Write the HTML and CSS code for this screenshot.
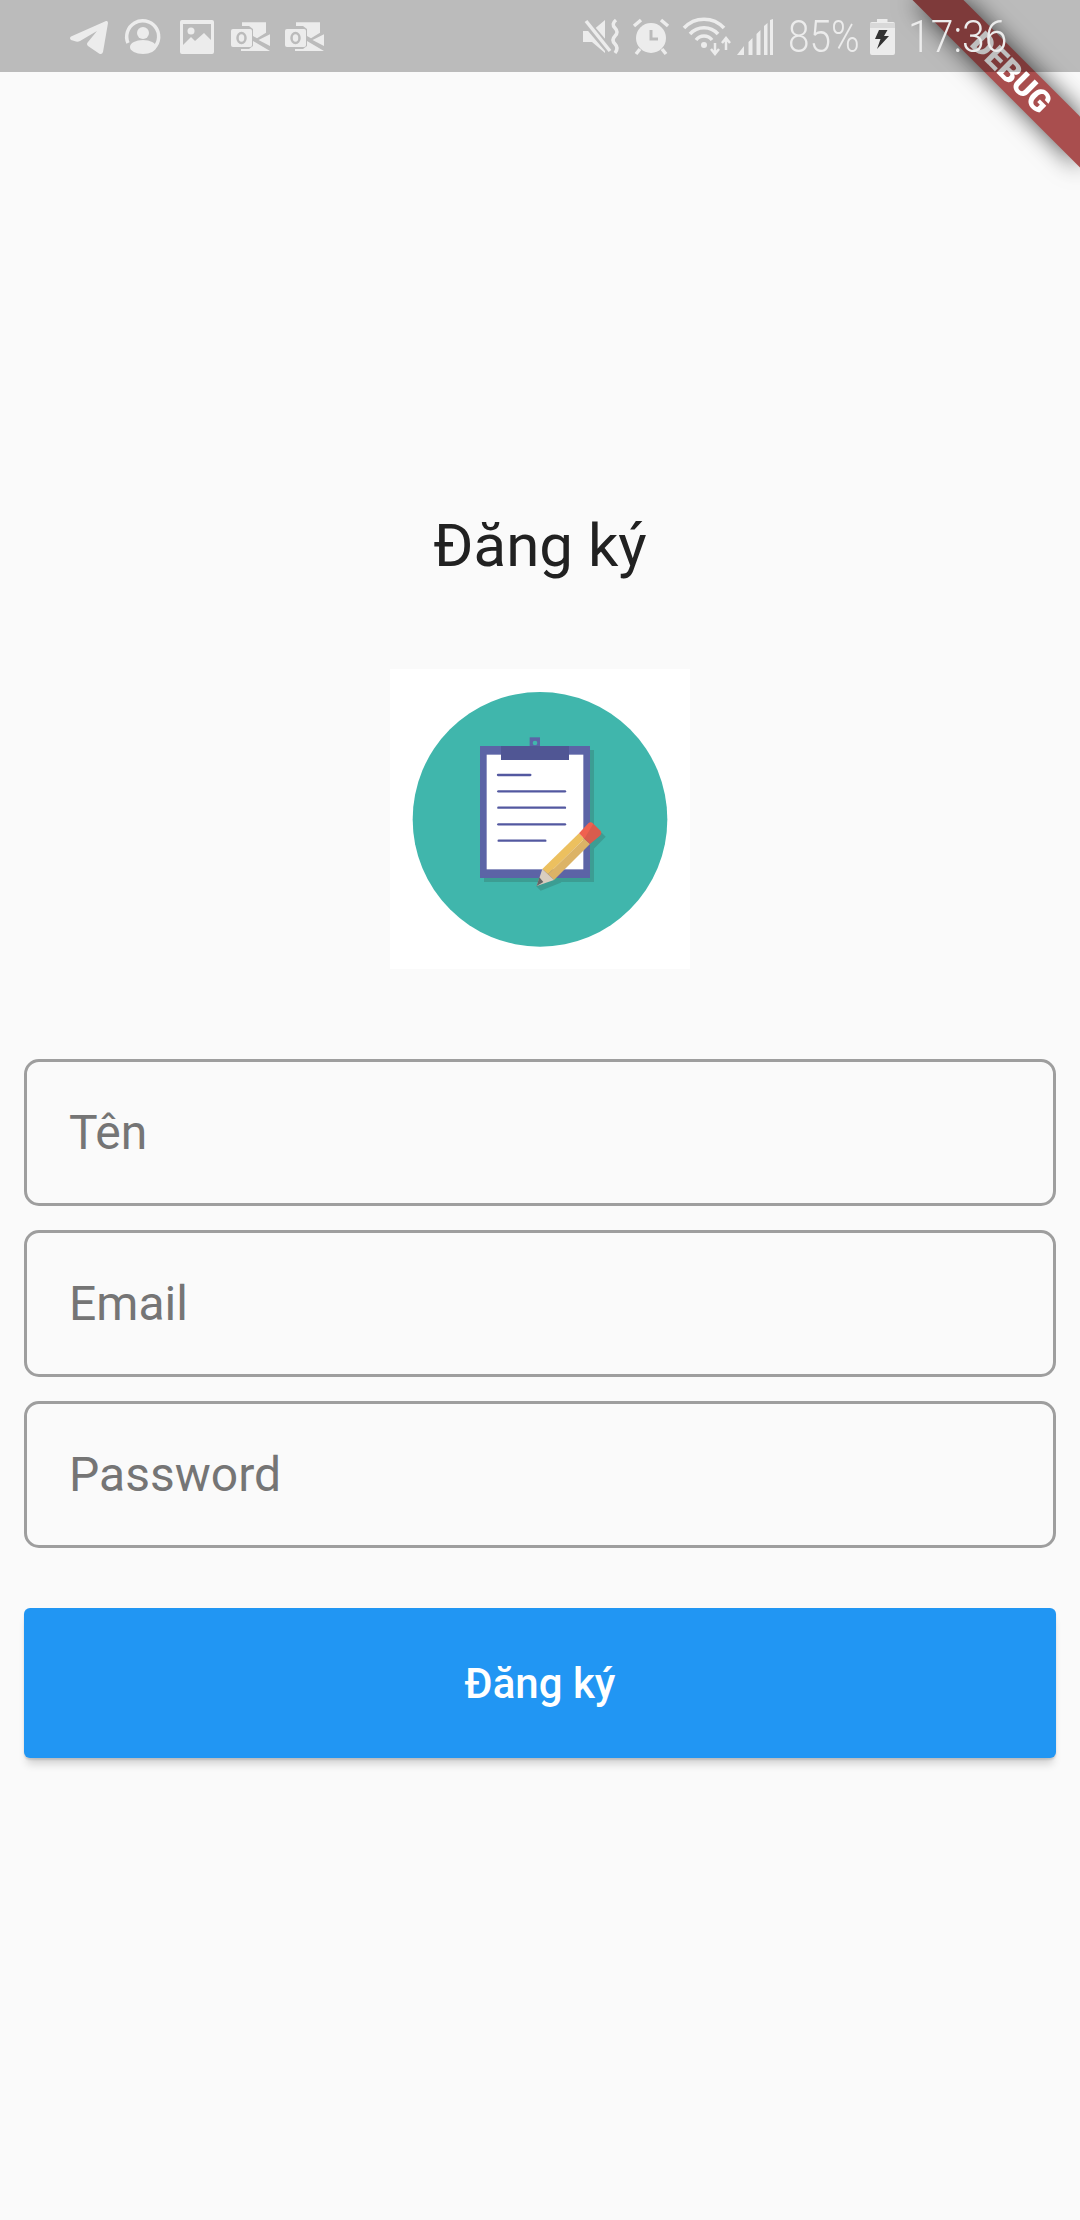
FILE: index.html
```html
<!DOCTYPE html>
<html lang="vi">

<head>
    <meta charset="UTF-8">
    <meta name="viewport" content="width=device-width, initial-scale=1.0">
    <title>Đăng ký</title>
    <link rel="stylesheet" href="styles.css">
</head>

<body>
    <div class="status-bar">
        <div class="status-left">
            <!-- telegram -->
            <svg class="icon" width="40" height="36" viewBox="0 0 40 36">
                <path d="M37 2 Q39 1.500 39 4 L34 33 Q33 36 30 34.500 L19 27 Q17 25 19 23 L28 12 L11 22 Q9 23 7 22.500 L2 21 Q0 19 2 17.500 Z" />
            </svg>
            <!-- contact -->
            <svg class="icon" width="36" height="36" viewBox="0 0 36 36">
                <path class="line" d="M3 24 A16 16 0 1 1 29 29" />
                <circle cx="18" cy="14" r="6" />
                <ellipse cx="18" cy="28" rx="13" ry="7" />
            </svg>
            <!-- gallery -->
            <svg class="icon icon-gallery" width="34" height="34" viewBox="0 0 34 34">
                <path fill-rule="evenodd" d="M2 0 H32 Q34 0 34 2 V32 Q34 34 32 34 H2 Q0 34 0 32 V2 Q0 0 2 0 Z M3 4 V25 L11 17 L15 21 L24 13 L31 20 V4 Z" />
                <circle cx="11" cy="11" r="3.500" />
            </svg>
            <!-- outlook -->
            <svg class="icon" width="38" height="32" viewBox="0 0 38 32">
                <rect x="0" y="8" width="21" height="18" rx="2" />
                <ellipse class="hole" cx="10.500" cy="17" rx="4" ry="5" />
                <path d="M11 1.300 H35 V11.700 L26 17.300 L22 15 V8 L18 5 H11 Z" />
                <path d="M39 13.300 V25 L27.500 19 Z" />
                <path d="M22 20 L39 30 H10 V28 H18 L22 25 Z" />
            </svg>
            <svg class="icon" width="38" height="32" viewBox="0 0 38 32">
                <rect x="0" y="8" width="21" height="18" rx="2" />
                <ellipse class="hole" cx="10.500" cy="17" rx="4" ry="5" />
                <path d="M11 1.300 H35 V11.700 L26 17.300 L22 15 V8 L18 5 H11 Z" />
                <path d="M39 13.300 V25 L27.500 19 Z" />
                <path d="M22 20 L39 30 H10 V28 H18 L22 25 Z" />
            </svg>
        </div>

        <div class="status-right">
            <!-- mute -->
            <svg class="icon" width="38" height="36" viewBox="0 0 38 36">
                <path d="M0 12 H9 L22 1 V34 L9 23 H0 Z" />
                <path class="cut" d="M1 1 L28 33" />
                <path class="thin" d="M3 2 L27 32" />
                <path class="thin" d="M33 1 Q28 5 32 9 Q36 13 32 17 Q28 21 32 25 Q36 29 32 34" />
            </svg>
            <!-- alarm -->
            <svg class="icon icon-alarm" width="36" height="36" viewBox="0 0 36 36">
                <circle cx="18" cy="19" r="15" />
                <path class="hand" d="M18 11 V20 H25" />
                <path class="thin" d="M1 7 L8 1 M28 1 L35 7 M7 30 L3 35 M29 30 L33 35" />
            </svg>
            <!-- wifi -->
            <svg class="icon icon-wifi" width="48" height="38" viewBox="0 0 48 38">
                <path class="thin" d="M1 10 A27 27 0 0 1 41 10 M7 16 A19 19 0 0 1 35 16 M13 22 A10 10 0 0 1 29 22" />
                <circle cx="21" cy="27" r="3" />
                <path class="thin-s" d="M32 25 V35 M28 31 L32 36 L36 31 M43 32 V21 M39 25 L43 20 L47 25" />
            </svg>
            <!-- signal -->
            <svg class="icon icon-signal" width="36" height="37" viewBox="0 0 36 37">
                <path d="M0 36 L7 27 V36 Z" />
                <path d="M11.500 23 L15.500 19 V36 H11.500 Z" />
                <path d="M19.500 15 L23.500 11 V36 H19.500 Z" />
                <path d="M27 7 L30.500 4 V36 H27 Z" />
                <path d="M33 1 L36 0 V36 H33 Z" />
            </svg>
            <span class="status-text battery-text">85%</span>
            <!-- battery -->
            <svg class="icon icon-battery" width="25" height="36" viewBox="0 0 25 36">
                <path d="M7 0 H17.500 V3 H23 Q25 3 25 5 V34 Q25 36 23 36 H2 Q0 36 0 34 V5 Q0 3 2 3 H7 Z" />
                <rect class="band" x="0" y="4" width="25" height="5" />
                <path class="bolt" d="M9 11 H17.500 L14 17 H19 L7 30 L10.500 20 H5 Z" />
            </svg>
            <span class="status-text time-text">17:36</span>
        </div>
    </div>

    <div class="content">
        <h1>Đăng ký</h1>

        <!-- clipboard logo, drawn in crop coordinates -->
        <svg class="logo" width="300" height="300" viewBox="30 27 900 900">
            <rect x="30" y="27" width="900" height="900" fill="#ffffff" />
            <circle cx="480" cy="478" r="382" fill="#40b6ac" />
            <rect x="312" y="270" width="330" height="396" fill="#3c9d93" />
            <path d="M665 518 L677 530 L542 668 L482 692 L468 678 Z" fill="#3c9d93" />
            <rect x="300" y="258" width="330" height="396" fill="#5c64a6" />
            <rect x="320" y="284" width="290" height="344" fill="#ffffff" />
            <rect x="449" y="232" width="31" height="44" fill="#5c64a6" />
            <circle cx="465" cy="249" r="7" fill="#40b6ac" />
            <rect x="363" y="258" width="204" height="42" fill="#505694" />
            <g stroke="#5358a0" stroke-width="7" stroke-linecap="round">
                <path d="M354 345 H451" />
                <path d="M355 394 H555" />
                <path d="M355 443 H555" />
                <path d="M355 493 H555" />
                <path d="M356 542 H496" />
            </g>
            <path d="M487 627 L597 520 L613 536 L504 643 Z" fill="#ecc05f" />
            <path d="M504 643 L613 536 L630 552 L522 660 Z" fill="#dcb366" />
            <path d="M597 520 L625 490 Q632 483 640 491 L632 536 L613 536 Z" fill="#f0614f" />
            <path d="M613 536 L640 491 L660 511 Q668 519 660 527 L630 552 Z" fill="#d95c4d" />
            <path d="M487 627 L522 660 L470 678 Z" fill="#d9cdbf" />
            <path d="M478 652 L490 666 L470 678 Z" fill="#666666" />
        </svg>

        <form class="register-form">
            <input type="text" placeholder="Tên">
            <input type="text" placeholder="Email">
            <input type="password" placeholder="Password">
            <button type="button">Đăng ký</button>
        </form>
    </div>

    <!-- corner ribbon, the status bar dims it from above -->
    <div class="debug-corner">
        <div class="debug-band"></div>
        <span class="debug-label">DEBUG</span>
    </div>
</body>

</html>
```

FILE: styles.css
```css
* {
    box-sizing: border-box;
}

html,
body {
    height: 100%;
}

body {
    margin: 0;
    background-color: #fafafa;
    font-family: Roboto, "Noto Sans", sans-serif;
    overflow: hidden;
    position: relative;
}

.status-bar {
    display: flex;
    justify-content: space-between;
    position: relative;
    z-index: 2;
    height: 72px;
    padding: 2px 72px 0 69px;
    background-color: rgba(0, 0, 0, 0.25);
}

.status-left,
.status-right {
    display: flex;
    align-items: center;
}

.status-left {
    gap: 16px;
}

.icon {
    display: block;
    fill: #ececec;
    overflow: visible;
}

.icon .line,
.icon .thin,
.icon .thin-s,
.icon .cut,
.icon .hand {
    fill: none;
}

.icon .line {
    stroke: #ececec;
    stroke-width: 3.5;
}

.icon .thin {
    stroke: #ececec;
    stroke-width: 3.5;
}

.icon .thin-s {
    stroke: #ececec;
    stroke-width: 2.5;
}

.icon .cut {
    stroke: #bbbbbb;
    stroke-width: 8;
}

.icon .hand {
    stroke: #bbbbbb;
    stroke-width: 3;
}

.icon .hole {
    fill: none;
    stroke: #bbbbbb;
    stroke-width: 2.5;
}

.icon .band {
    fill: #d8d8d8;
}

.icon .bolt {
    fill: #333333;
}

.icon-gallery {
    margin: 0 1px 0 3px;
}

.icon-alarm {
    margin-left: 12px;
}

.icon-wifi {
    margin-left: 14px;
}

.icon-signal {
    margin-left: 6px;
}

.icon-battery {
    margin-left: 13px;
}

.status-text {
    display: block;
    color: #ececec;
    font-size: 44px;
    font-weight: 300;
    line-height: 50px;
    transform-origin: left center;
    white-space: nowrap;
}

.battery-text {
    width: 69px;
    margin-left: 15px;
    transform: scaleX(0.88);
}

.time-text {
    width: 100px;
    margin-left: 13px;
    transform: scaleX(0.93);
}

.content {
    display: flex;
    flex-direction: column;
    align-items: center;
    padding: 434px 24px 0;
}

h1 {
    margin: 0;
    color: #212121;
    font-size: 60px;
    font-weight: 400;
    line-height: 80px;
}

.logo {
    display: block;
    margin-top: 83px;
}

.register-form {
    display: flex;
    flex-direction: column;
    gap: 24px;
    width: 100%;
    margin-top: 90px;
}

.register-form input {
    display: block;
    width: 100%;
    height: 147px;
    padding: 0 42px;
    border: 3px solid #9e9e9e;
    border-radius: 15px;
    background: transparent;
    color: #212121;
    font-family: inherit;
    font-size: 48px;
}

.register-form input::placeholder {
    color: #757575;
    opacity: 1;
}

.register-form button {
    height: 150px;
    margin-top: 36px;
    border: 0;
    border-radius: 6px;
    background-color: #2196f3;
    color: #ffffff;
    font-family: inherit;
    font-size: 42px;
    font-weight: 500;
    box-shadow: 0 9px 8px -3px rgba(0, 0, 0, 0.16), 0 2px 2px rgba(0, 0, 0, 0.12);
}

/* ribbon lies over the page corner */
.debug-corner {
    position: absolute;
    top: 0;
    right: 0;
    z-index: 1;
    width: 180px;
    height: 180px;
    filter: drop-shadow(0 0 12px rgba(0, 0, 0, 0.7));
}

.debug-band {
    height: 100%;
    background-color: #a94e4e;
    clip-path: polygon(12.5px 0, 63.5px 0, 180px 116.5px, 180px 167.5px);
}

.debug-label {
    position: absolute;
    left: 51px;
    top: 55px;
    width: 120px;
    color: #ffffff;
    font-size: 31px;
    font-weight: 900;
    line-height: 36px;
    text-align: center;
    transform: rotate(45deg);
}
```
